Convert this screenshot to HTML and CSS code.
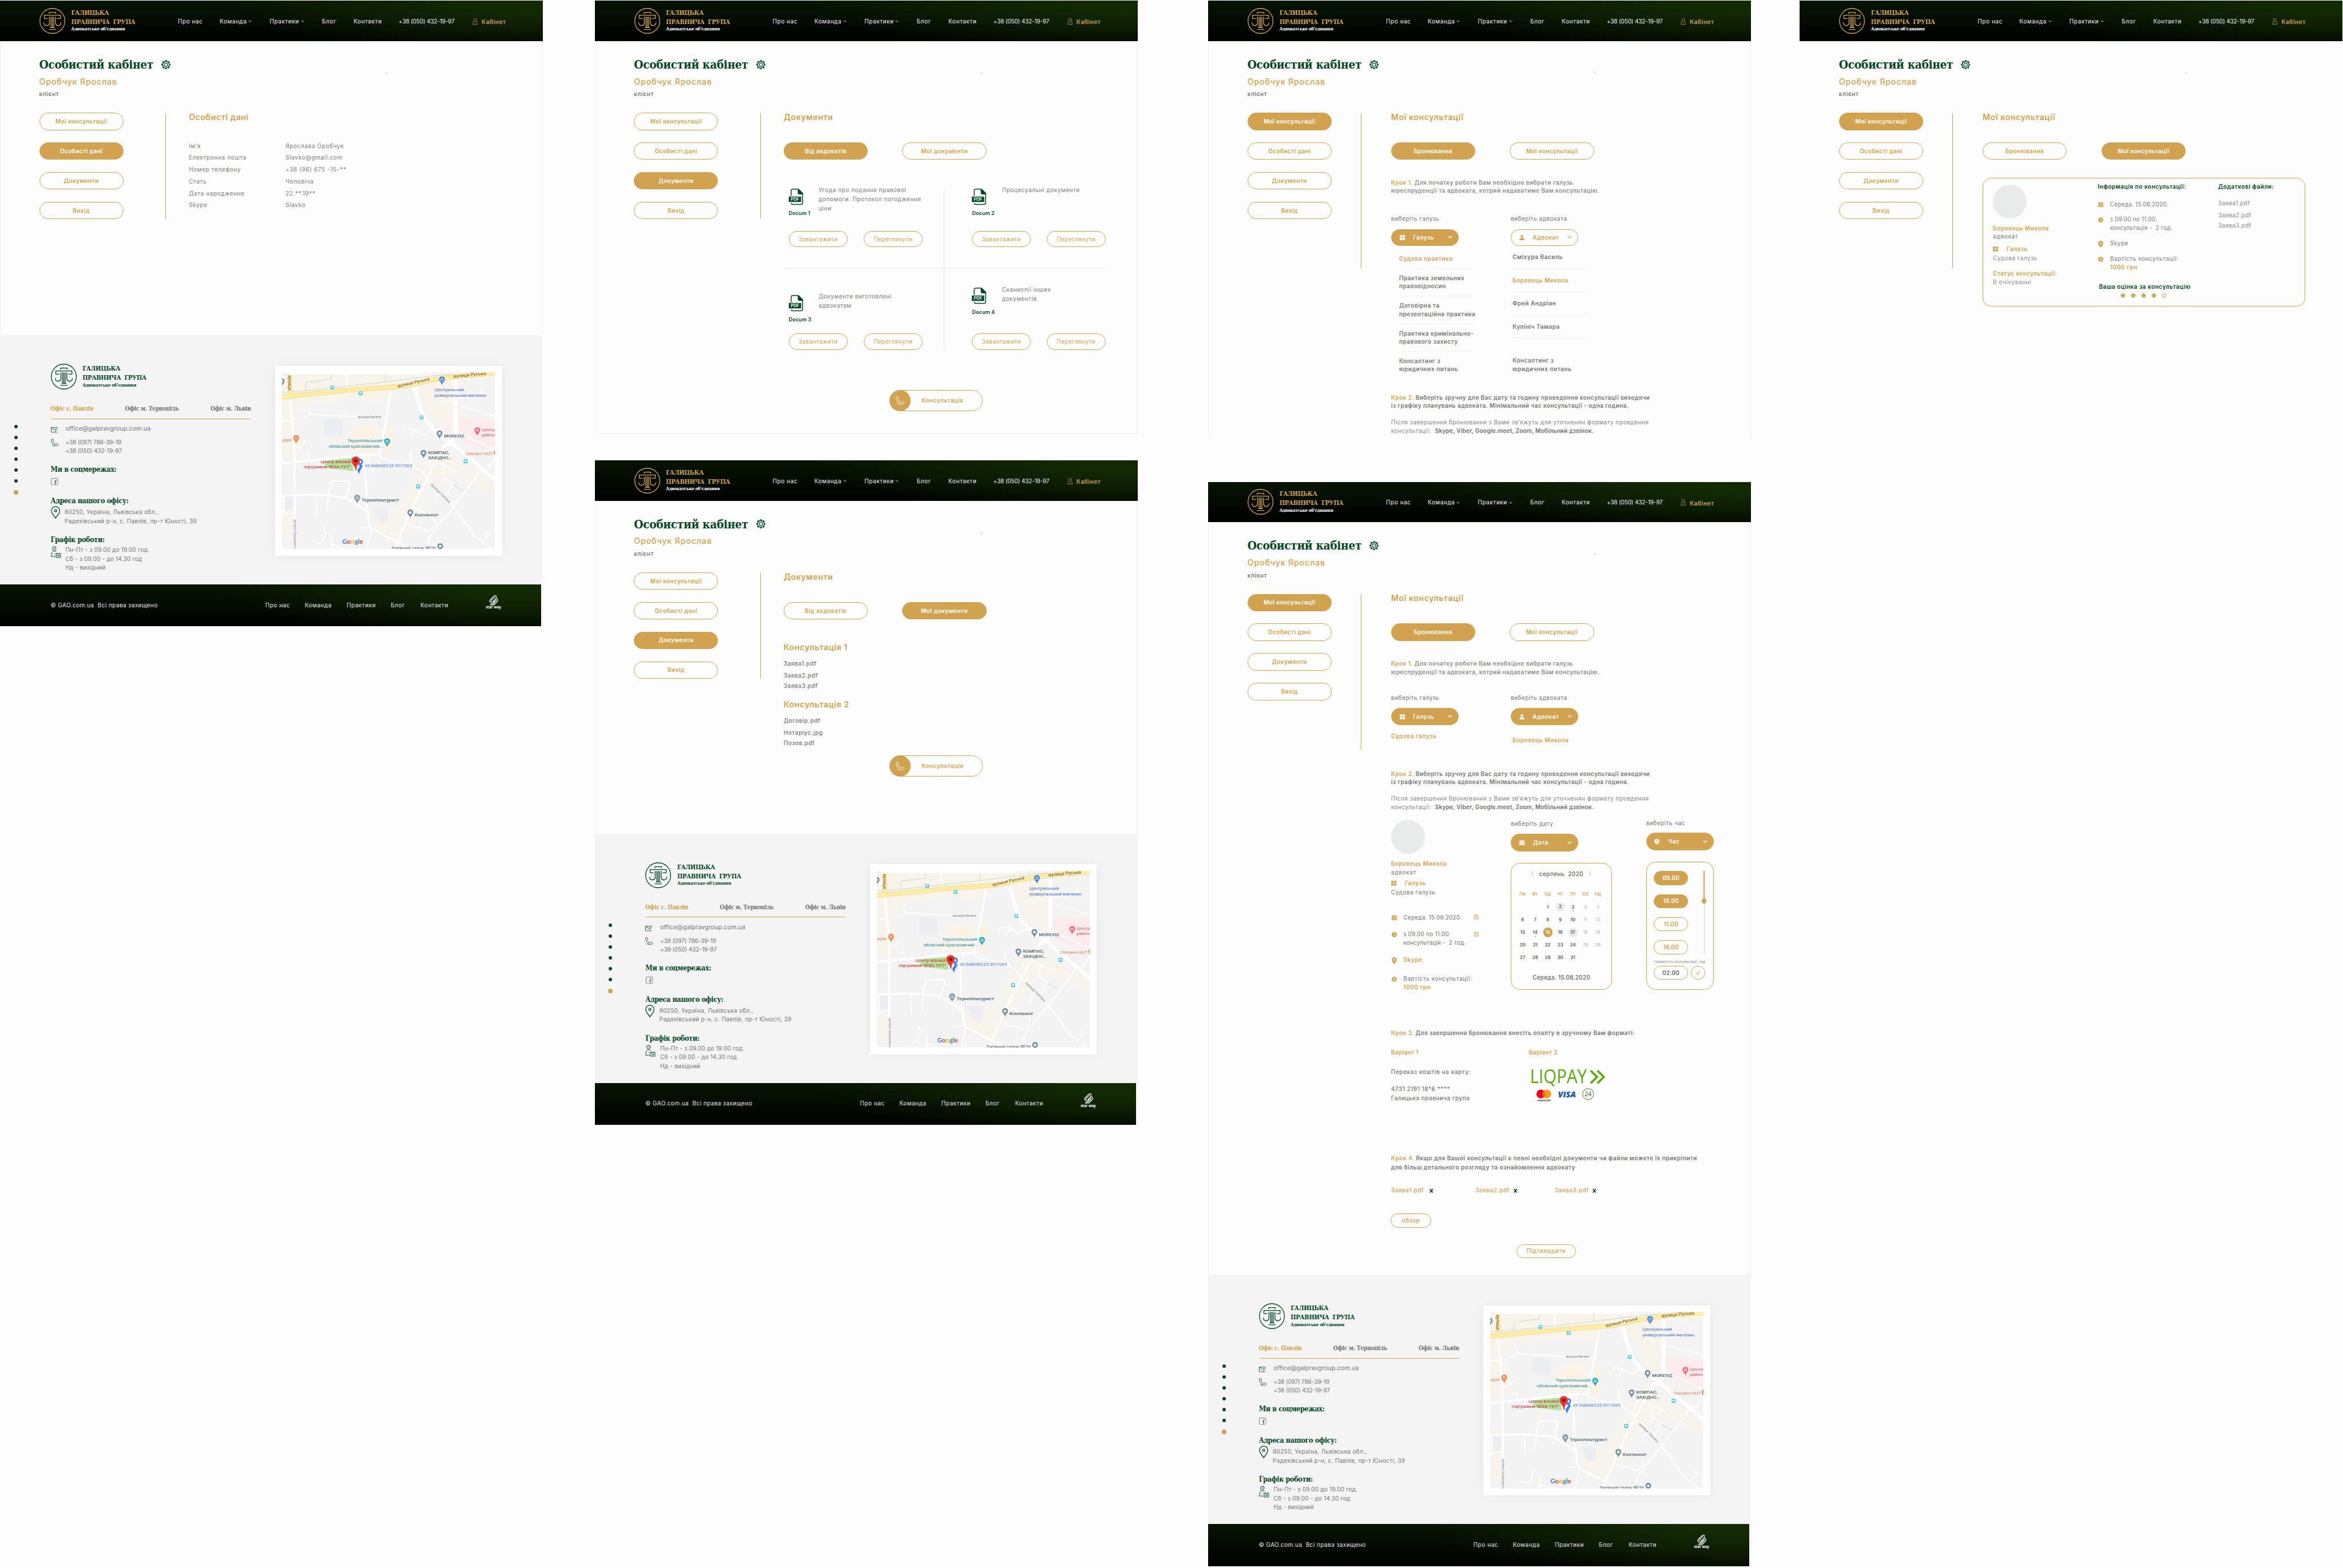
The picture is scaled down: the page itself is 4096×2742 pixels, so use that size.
FILE: index.html
```html
<!DOCTYPE html>
<html lang="uk">
<head>
<meta charset="utf-8">
<title>Галицька правнича група — особистий кабінет</title>
<link rel="stylesheet" href="styles.css">
</head>
<body>
<svg class="sprite" aria-hidden="true">
  <symbol id="i-logo" viewBox="0 0 61 61"><g fill="none" stroke="currentColor" stroke-width="1.8"><circle cx="30.5" cy="30.5" r="29.5"/><path d="M23 13.8v-3.6h15.3v3.6M11.5 24.7V17h38v7.7M11.5 24.7h8.5M49.5 24.7H41M23.5 20.5V35.5a6.6 6.6 0 0 1-13.3-1.5M37.5 20.5V35.5a6.6 6.6 0 0 0 13.3-1.5M27.3 20.5V45.5M30.4 20.5V45.5M33.6 20.5V45.5M25 46.3h11.5M22.5 50.8H39"/></g></symbol>
  <symbol id="i-gear" viewBox="0 0 22 22"><g fill="none" stroke="currentColor"><circle cx="11" cy="11" r="8" stroke-width="1.9"/><circle cx="11" cy="11" r="9.8" stroke-width="2.3" stroke-dasharray="3.85 3.85" stroke-dashoffset="1.9"/><circle cx="11" cy="11" r="4" stroke-width="1.7"/></g></symbol>
  <symbol id="i-chevron" viewBox="0 0 12 8"><path d="M1.5 1.5L6 6l4.500-4.500" fill="none" stroke="currentColor" stroke-width="1.9"/></symbol>
  <symbol id="i-left" viewBox="0 0 7 14"><path d="M5.500 1.500L1.500 7l4 5.500" fill="none" stroke="currentColor" stroke-width="1.6"/></symbol>
  <symbol id="i-right" viewBox="0 0 7 14"><path d="M1.500 1.500L5.500 7l-4 5.500" fill="none" stroke="currentColor" stroke-width="1.6"/></symbol>
  <symbol id="i-user" viewBox="0 0 13 15"><g fill="none" stroke="currentColor" stroke-width="1.100"><ellipse cx="6.500" cy="4.500" rx="3.400" ry="3.900"/><path d="M4.200 8C2 9 1 10.500 1 14h11c0-3.500-1-5-3.200-6"/></g></symbol>
  <symbol id="i-person" viewBox="0 0 13 13"><path fill="currentColor" d="M6.500 0a3.200 3.200 0 0 1 3.200 3.300c0 1.800-1.400 3.400-3.200 3.400S3.300 5.100 3.300 3.300A3.200 3.200 0 0 1 6.500 0zM0 13c0-3.600 2-5 4.300-5.200h4.400C11 8 13 9.400 13 13z"/></symbol>
  <symbol id="i-grid" viewBox="0 0 13 12"><path fill="currentColor" d="M0 0h6v5.500H0zM7.200 0h6v5.500h-6zM0 6.600h6V12H0zM7.200 6.600h6V12h-6z"/></symbol>
  <symbol id="i-calendar" viewBox="0 0 12 12"><path fill="currentColor" fill-rule="evenodd" d="M2.200 0h1.600v1.300h4.400V0h1.600v1.300H12v2.300H0V1.300h2.200zM0 4.300h12V11a1 1 0 0 1-1 1H1a1 1 0 0 1-1-1zM2.300 6v1.500h1.700V6zm2.900 0v1.500h1.700V6zm2.900 0v1.500h1.700V6zM2.300 8.700v1.500h1.700V8.700zm2.900 0v1.500h1.700V8.700zm2.900 0v1.500h1.700V8.700z"/></symbol>
  <symbol id="i-clock" viewBox="0 0 12 12"><path fill="currentColor" fill-rule="evenodd" d="M6 0a6 6 0 1 1 0 12A6 6 0 0 1 6 0zM5.300 2.200v4.300l2.900 2.600 1-1.100-2.500-2.200V2.200z"/></symbol>
  <symbol id="i-pin" viewBox="0 0 12 16"><path fill="currentColor" fill-rule="evenodd" d="M6 0a6 6 0 0 1 6 6c0 3.800-3.600 7-6 10C3.600 13 0 9.800 0 6a6 6 0 0 1 6-6zm0 3.900a2.200 2.200 0 1 0 0 4.400 2.200 2.200 0 0 0 0-4.400z"/></symbol>
  <symbol id="i-coin" viewBox="0 0 12 12"><circle cx="6" cy="6" r="6" fill="currentColor"/><path d="M7.900 4.300C7.500 3.400 4.300 3.100 4.300 4.700c0 1.500 3.500.9 3.500 2.600 0 1.500-3.200 1.500-3.700.4M6 2.200v7.600" fill="none" stroke="#fdfdfd" stroke-width="1"/></symbol>
  <symbol id="i-phone" viewBox="0 0 20 20"><g fill="none" stroke="currentColor" stroke-width="1.300" stroke-linejoin="round" stroke-linecap="round"><path d="M2.500 1.200C4.200-.3 6.800 1.400 6.800 4c0 2-1.600 2.200-1.100 3.900.7 2.200 3.300 4.900 5.200 5.700 1.800.7 2.500-1 4.400-1.100 2.600 0 4.700 2.200 3.800 4.100-.9 1.700-3.200 2.200-5.300 2C7.600 18 1 10.600 1 5.200c0-1.600.4-3.100 1.500-4z"/><path d="M4 18.200c1.300 1 1.800-.7 3-.2s1.600 1.100 2.800.6"/></g></symbol>
  <symbol id="i-mail" viewBox="0 0 17 13"><path d="M15 12H2a1.300 1.300 0 0 1-1.300-1.300V1h15.500M1 1l6.600 5.600 3-2M13 4h2.500M11 7h2.500M9.500 9.500h2M10 6l2-2" fill="none" stroke="currentColor" stroke-width="1.200"/></symbol>
  <symbol id="i-facebook" viewBox="0 0 17 17"><rect x=".7" y=".7" width="15.600" height="15.600" rx="1.500" fill="none" stroke="currentColor" stroke-width="1.300"/><path d="M13.300 5.500h-1.200c-1.300 0-1.700.7-1.700 1.800V16M7.500 9.300h5.200" fill="none" stroke="currentColor" stroke-width="1.900"/></symbol>
  <symbol id="i-marker" viewBox="0 0 22 30"><g fill="none" stroke="currentColor" stroke-width="1.800"><path d="M11 1.200c5.400 0 9.800 4.200 9.800 9.600C20.800 18 13.500 24 11 28.500 8.500 24 1.200 18 1.200 10.800 1.200 5.400 5.600 1.200 11 1.200z"/><circle cx="11" cy="10.800" r="2.600"/></g></symbol>
  <symbol id="i-schedule" viewBox="0 0 24 28"><g fill="none" stroke="currentColor" stroke-width="1.300"><circle cx="7.800" cy="5.300" r="4.500"/><path d="M10 3L7.500 5.800H6M11 24.500H.8l1.500-8.500c.5-3 2.500-4.200 5.500-4.200s4.400.8 5 2.700M8 18.500h3"/><path d="M12.500 18h10.700v9.300H12.500zM15 16v3M20.500 16v3M15 21.500h6M15 24.200h6"/></g></symbol>
  <symbol id="i-starway" viewBox="0 0 23 24"><g fill="none" stroke="currentColor" stroke-width="1.700" stroke-linejoin="round"><path d="M18 .8h-4L5 9.500c-3 3-3 6 .5 8.500M18 .8v6.700l-8.500 8.200M15 3.500L7.500 11c-2 2-1.800 4 .2 5.500M19 7c4 2.500 3.500 6 1 8.700L13 23H4.500l11-10.500M17 10c1.500 1.500 1 3.500-.5 5L9.500 22"/></g></symbol>
  <symbol id="i-star" viewBox="0 0 15 14"><path d="M7.500.3l2.200 4.700 5 .6-3.700 3.500 1 4.900-4.500-2.500L3 14l1-4.900L.3 5.600l5-.6z" fill="currentColor"/></symbol>
  <symbol id="i-star-empty" viewBox="0 0 15 14"><path d="M7.500 1.600l1.800 3.900 4.200.5-3.100 2.900.8 4.100-3.700-2-3.700 2 .8-4.100L1.500 6l4.200-.5z" fill="none" stroke="currentColor" stroke-width="1.300"/></symbol>
  <symbol id="i-check" viewBox="0 0 12 12"><path d="M1 6.500l3.500 4L11 1.500" fill="none" stroke="currentColor" stroke-width="1.500"/></symbol>
  <symbol id="i-cross" viewBox="0 0 10 10"><path d="M1 0l8 10M9 0L1 10" stroke="currentColor" stroke-width="2.600"/></symbol>
  <symbol id="m-pin" viewBox="0 0 20 27"><path d="M10 0c5 0 8.500 3.700 8.500 8.500C18.500 15 11 17.500 10 26 9 17.500 1.500 15 1.500 8.500 1.500 3.700 5 0 10 0z" fill="currentColor"/></symbol>
  <symbol id="m-bus" viewBox="0 0 10 10"><rect width="10" height="10" rx="1.500" fill="#1fb6ee"/><path d="M2 2h6v4.500H2zM2 7.500h2v1H2zM6 7.500h2v1H6z" fill="#fff"/></symbol>
</svg>

<div class="board">
  <div class="column">
    <article class="screen">
      <site-header></site-header>
      <main class="cabinet cabinet--profile">
        <user-title></user-title>
        <div class="workspace">
          <side-menu active="1"></side-menu>
          <section class="panel">
            <h2 class="heading">Особисті дані</h2>
            <dl class="profile">
              <dt>Ім’я</dt><dd>Ярослава Оробчук</dd>
              <dt>Електронна пошта</dt><dd>Slavko@gmail.com</dd>
              <dt>Номер телефону</dt><dd>+38 (96) 675 -15-**</dd>
              <dt>Стать</dt><dd>Чоловіча</dd>
              <dt>Дата народження</dt><dd>22.**.19**</dd>
              <dt>Skype</dt><dd>Slavko</dd>
            </dl>
          </section>
        </div>
      </main>
      <site-footer></site-footer>
    </article>
  </div>

  <div class="column">
    <article class="screen screen--documents">
      <site-header></site-header>
      <main class="cabinet cabinet--documents">
        <user-title></user-title>
        <div class="workspace">
          <side-menu active="2"></side-menu>
          <section class="panel">
            <h2 class="heading">Документи</h2>
            <div class="tabs"><a class="pill pill--on">Від авдокатів</a><a class="pill">Мої документи</a></div>
            <div class="docs">
              <div class="doc"><div class="doc__head"><pdf-file>Docum 1</pdf-file><p class="doc__text">Угода про подання правової<br>допомоги. Протокол погодження<br>ціни</p></div><div class="doc__actions"><a class="pill pill--thin">Завантажити</a><a class="pill pill--thin">Переглянути</a></div></div>
              <div class="doc"><div class="doc__head"><pdf-file>Docum 2</pdf-file><p class="doc__text">Процесуальні документи</p></div><div class="doc__actions"><a class="pill pill--thin">Завантажити</a><a class="pill pill--thin">Переглянути</a></div></div>
              <div class="doc doc--third"><div class="doc__head"><pdf-file>Docum 3</pdf-file><p class="doc__text">Документи виготовлені<br>адвокатам</p></div><div class="doc__actions"><a class="pill pill--thin">Завантажити</a><a class="pill pill--thin">Переглянути</a></div></div>
              <div class="doc doc--fourth"><div class="doc__head"><pdf-file>Docum 4</pdf-file><p class="doc__text">Сканкопії інших<br>документів</p></div><div class="doc__actions"><a class="pill pill--thin">Завантажити</a><a class="pill pill--thin">Переглянути</a></div></div>
            </div>
            <a class="call call--docs"><span class="call__icon"><svg><use href="#i-phone"/></svg></span><span class="call__text">Консультація</span></a>
          </section>
        </div>
      </main>
    </article>

    <article class="screen screen--files">
      <site-header></site-header>
      <main class="cabinet cabinet--files">
        <user-title></user-title>
        <div class="workspace">
          <side-menu active="2"></side-menu>
          <section class="panel">
            <h2 class="heading">Документи</h2>
            <div class="tabs"><a class="pill">Від авдокатів</a><a class="pill pill--on">Мої документи</a></div>
            <h3 class="heading heading--first">Консультація 1</h3>
            <ul class="files"><li>Заява1.pdf</li><li>Заява2.pdf</li><li>Заява3.pdf</li></ul>
            <h3 class="heading heading--next">Консультація 2</h3>
            <ul class="files"><li>Договір.pdf</li><li>Нотаріус.jpg</li><li>Позов.pdf</li></ul>
            <a class="call call--files"><span class="call__icon"><svg><use href="#i-phone"/></svg></span><span class="call__text">Консультація</span></a>
          </section>
        </div>
      </main>
      <site-footer></site-footer>
    </article>
  </div>

  <div class="column">
    <article class="screen screen--booking">
      <site-header></site-header>
      <main class="cabinet cabinet--choice">
        <user-title></user-title>
        <div class="workspace workspace--tall">
          <side-menu active="0"></side-menu>
          <section class="panel">
            <h2 class="heading">Мої консультації</h2>
            <div class="tabs"><a class="pill pill--on">Бронювання</a><a class="pill">Мої консультації</a></div>
            <p class="step step--first"><b>Крок 1.</b> Для початку роботи Вам необхідно вибрати галузь<br>юреспруденції та адвоката, котрий надаватиме Вам консультацію.</p>
            <div class="choice choice--open">
              <div>
                <p class="label">виберіть галузь</p>
                <div class="select select--on"><svg class="ico"><use href="#i-grid"/></svg><span>Галузь</span><svg class="chev"><use href="#i-chevron"/></svg></div>
                <ul class="options options--area">
                  <li class="is-on">Судова практика</li><li>Практика земельних<br>правовідносин</li><li>Договірна та<br>презентаційна практика</li><li>Практика кримінально-<br>правового захисту</li><li>Консалтинг з<br>юридичних питань</li>
                </ul>
              </div>
              <div>
                <p class="label">виберіть адвоката</p>
                <div class="select"><svg class="ico"><use href="#i-person"/></svg><span>Адвокат</span><svg class="chev"><use href="#i-chevron"/></svg></div>
                <ul class="options options--lawyer">
                  <li>Сміхура Василь</li><li class="is-on">Боровець Микола</li><li>Фрей Андріан</li><li>Кулініч Тамара</li><li>Консалтинг з<br>юридичних питань</li>
                </ul>
              </div>
            </div>
            <p class="step"><b>Крок 2.</b> Виберіть зручну для Вас дату та годину проведення консультації виходячи<br>із графіку планувань адвоката. Мінімальний час консультації - одна година.</p>
            <p class="note">Після завершення бронювання з Вами зв’яжуть для уточненян формату провдення<br>консультації: &nbsp;<strong>Skype, Viber, Google.meet, Zoom, Мобільний дзвінок.</strong></p>
          </section>
        </div>
      </main>
    </article>

    <article class="screen">
      <site-header></site-header>
      <main class="cabinet cabinet--order">
        <user-title></user-title>
        <div class="workspace workspace--tall">
          <side-menu active="0"></side-menu>
          <section class="panel">
            <h2 class="heading">Мої консультації</h2>
            <div class="tabs"><a class="pill pill--on">Бронювання</a><a class="pill">Мої консультації</a></div>
            <p class="step step--first"><b>Крок 1.</b> Для початку роботи Вам необхідно вибрати галузь<br>юреспруденції та адвоката, котрий надаватиме Вам консультацію.</p>
            <div class="choice choice--done">
              <div>
                <p class="label">виберіть галузь</p>
                <div class="select select--on"><svg class="ico"><use href="#i-grid"/></svg><span>Галузь</span><svg class="chev"><use href="#i-chevron"/></svg></div>
                <p class="picked">Судова галузь</p>
              </div>
              <div>
                <p class="label">виберіть адвоката</p>
                <div class="select select--on"><svg class="ico"><use href="#i-person"/></svg><span>Адвокат</span><svg class="chev"><use href="#i-chevron"/></svg></div>
                <p class="picked picked--lawyer">Боровець Микола</p>
              </div>
            </div>
            <p class="step"><b>Крок 2.</b> Виберіть зручну для Вас дату та годину проведення консультації виходячи<br>із графіку планувань адвоката. Мінімальний час консультації - одна година.</p>
            <p class="note">Після завершення бронювання з Вами зв’яжуть для уточненян формату провдення<br>консультації: &nbsp;<strong>Skype, Viber, Google.meet, Zoom, Мобільний дзвінок.</strong></p>

            <div class="booking">
              <div class="summary">
                <div class="avatar"></div>
                <p class="name">Боровець Микола</p>
                <p class="role">адвокат</p>
                <p class="area"><svg class="ico"><use href="#i-grid"/></svg>Галузь</p>
                <p class="area-name">Судова галузь</p>
                <ul class="facts">
                  <li><svg class="ico"><use href="#i-calendar"/></svg><span class="num">Середа. 15.08.2020.</span><svg class="edit"><use href="#i-gear"/></svg></li>
                  <li><svg class="ico"><use href="#i-clock"/></svg><span class="num">з 09.00 по 11.00.<br>консультація -&nbsp; 2 год.</span><svg class="edit"><use href="#i-gear"/></svg></li>
                  <li><svg class="ico ico--pin"><use href="#i-pin"/></svg><b>Skype</b></li>
                  <li><svg class="ico"><use href="#i-coin"/></svg><span>Вартість консультації:<br><b>1000 грн</b></span></li>
                </ul>
              </div>
              <div class="date">
                <p class="label">виберіть дату</p>
                <div class="select select--on select--date"><svg class="ico"><use href="#i-calendar"/></svg><span>Дата</span><svg class="chev"><use href="#i-chevron"/></svg></div>
                <div class="calendar">
                  <div class="calendar__head"><svg><use href="#i-left"/></svg><span>серпень&nbsp; 2020</span><svg><use href="#i-right"/></svg></div>
                  <div class="calendar__grid">
                    <b>Пн</b><b>Вт</b><b>Ср</b><b>Чт</b><b>Пт</b><b>Сб</b><b>Нд</b>
                    <i></i><i></i><i>1</i><i class="mark">2</i><i class="dot">3</i><i class="off">4</i><i class="off">5</i>
                    <i>6</i><i>7</i><i>8</i><i>9</i><i>10</i><i class="off">11</i><i class="off">12</i>
                    <i>13</i><i class="dot">14</i><i class="sel">15</i><i>16</i><i class="mark">17</i><i class="off">18</i><i class="off">19</i>
                    <i>20</i><i>21</i><i>22</i><i>23</i><i>24</i><i class="off">25</i><i class="off">26</i>
                    <i>27</i><i>28</i><i>29</i><i>30</i><i>31</i>
                  </div>
                  <p class="calendar__foot">Середа. 15.08.2020</p>
                </div>
              </div>
              <div class="time">
                <p class="label">виберіть час</p>
                <div class="select select--on select--time"><svg class="ico"><use href="#i-clock"/></svg><span>Час</span><svg class="chev"><use href="#i-chevron"/></svg></div>
                <div class="hours">
                  <div class="hours__row">
                    <div class="hours__list"><a class="hour hour--on">09.00</a><a class="hour hour--on">10.00</a><a class="hour">11.00</a><a class="hour">16.00</a></div>
                    <div class="track"><span class="track__past"></span><span class="track__knob"></span><span class="track__rest"></span></div>
                  </div>
                  <p class="hours__label">тривалість консультації, год</p>
                  <div class="hours__end"><a class="hour hour--length">02.00</a><a class="hour hour--ok"><svg><use href="#i-check"/></svg></a></div>
                </div>
              </div>
            </div>

            <p class="step step--pay"><b>Крок 3.</b> Для завершення бронювання внесіть опалту в зручному Вам форматі:</p>
            <div class="payment">
              <div>
                <p class="variant">Варіант 1</p>
                <p class="card-text">Переказ коштів на карту:</p>
                <p class="card-text card-text--num">4731 2191 18*6 ****<br>Галицька правнича група</p>
              </div>
              <div>
                <p class="variant">Варіант 2</p>
                <svg class="liqpay" viewBox="0 0 190 86">
                  <text x="1" y="37" font-size="43.500" textLength="134" lengthAdjust="spacingAndGlyphs" fill="#5ea80c">LIQPAY</text>
                  <path d="M144 7l15 15-15 15M160 7l15 15-15 15" fill="none" stroke="#5ea80c" stroke-width="5"/>
                  <circle cx="26.500" cy="62.300" r="10.300" fill="#e8001c"/><circle cx="40.500" cy="62.300" r="10.300" fill="#f79a1d"/><path d="M33.500 54.700a10.300 10.300 0 0 1 0 15.200 10.300 10.300 0 0 1 0-15.200z" fill="#ff5f00"/>
                  <text x="18" y="79" font-size="6.500" textLength="32" fill="#333" font-weight="600">mastercard</text>
                  <text x="67" y="70" font-size="18.500" font-weight="800" font-style="italic" textLength="42" lengthAdjust="spacingAndGlyphs" fill="#15529c">VISA</text>
                  <circle cx="138" cy="62.500" r="13" fill="none" stroke="#5fa043" stroke-width="1.600"/>
                  <text x="138" y="67.500" font-size="13.500" text-anchor="middle" fill="#444">24</text>
                </svg>
              </div>
            </div>
            <p class="step step--attach"><b>Крок 4.</b> Якщо для Вашої консультації є певні необхідні документи чи файли можете їх прикріпити<br>для більш детального розгляду та ознайомлення адвокату</p>
            <ul class="attached"><li>Заява1.pdf<svg><use href="#i-cross"/></svg></li><li>Заява2.pdf<svg><use href="#i-cross"/></svg></li><li>Заява3.pdf<svg><use href="#i-cross"/></svg></li></ul>
            <a class="pill pill--thin pill--browse">обзор</a>
            <a class="pill pill--thin pill--confirm">Підтвердити</a>
          </section>
        </div>
      </main>
      <site-footer></site-footer>
    </article>
  </div>

  <div class="column">
    <article class="screen screen--plain">
      <site-header></site-header>
      <main class="cabinet cabinet--history">
        <user-title></user-title>
        <div class="workspace workspace--tall">
          <side-menu active="0"></side-menu>
          <section class="panel">
            <h2 class="heading">Мої консультації</h2>
            <div class="tabs"><a class="pill">Бронювання</a><a class="pill pill--on">Мої консультації</a></div>
            <div class="ticket">
              <div class="ticket__who">
                <div class="avatar"></div>
                <p class="name">Боровець Микола</p>
                <p class="role">адвокат</p>
                <p class="area"><svg class="ico"><use href="#i-grid"/></svg>Галузь</p>
                <p class="area-name">Судова галузь</p>
                <p class="status">Статус консультації:</p>
                <p class="status-value">В очікуванні</p>
              </div>
              <div class="ticket__info">
                <h4 class="ticket__title">Інформація по консультації:</h4>
                <ul class="facts">
                  <li><svg class="ico"><use href="#i-calendar"/></svg><span class="num">Середа. 15.08.2020.</span></li>
                  <li><svg class="ico"><use href="#i-clock"/></svg><span class="num">з 09.00 по 11.00.<br>консультація -&nbsp; 2 год.</span></li>
                  <li><svg class="ico ico--pin"><use href="#i-pin"/></svg><span>Skype</span></li>
                  <li><svg class="ico"><use href="#i-coin"/></svg><span>Вартість консультації:<br><b>1000 грн</b></span></li>
                </ul>
                <h4 class="ticket__title ticket__title--rate">Ваша оцінка за консультацію</h4>
                <div class="stars"><svg><use href="#i-star"/></svg><svg><use href="#i-star"/></svg><svg><use href="#i-star"/></svg><svg><use href="#i-star"/></svg><svg><use href="#i-star-empty"/></svg></div>
              </div>
              <div class="ticket__files">
                <h4 class="ticket__title">Додаткові файли:</h4>
                <ul class="files"><li>Заява1.pdf</li><li>Заява2.pdf</li><li>Заява3.pdf</li></ul>
              </div>
            </div>
          </section>
        </div>
      </main>
    </article>
  </div>
</div>
<script src="components.js"></script>
</body>
</html>
```

FILE: styles.css
```css
/* 1rem equals ten layout units of the 5525-unit board */
html { font-size: 7.4136px; }
* { box-sizing: border-box; margin: 0; padding: 0; }
body { background: #fff; overflow: hidden; font: 400 1.35rem/2rem Inter, sans-serif; letter-spacing: .056em; color: #757575; }
ul { list-style: none; }
p, a, li, h1, h2, h3, h4, dt, dd, span { white-space: nowrap; }
svg { display: block; flex: none; overflow: visible; }
.sprite { position: absolute; width: 0; height: 0; }

.board { display: flex; width: 4096px; height: 2742px; background: #fdfdfd; overflow: hidden; }
.column { flex: none; width: 128rem; margin-right: 12.25rem; }
.column:nth-child(2) { margin-right: 16.65rem; }
.column:nth-child(3) { margin-right: 11.5rem; }
.column:nth-child(4) { margin-right: 0; }
.screen { width: 128rem; padding-top: .2rem; background: #fdfdfd; box-shadow: inset 1px 0 #efefef, inset -1px 0 #efefef; }
.screen--documents { box-shadow: inset 0 0 0 1px #efefef; }
.screen--plain { box-shadow: none; }
site-header, site-footer, user-title { display: block; }

/* top bar */
.topbar { display: flex; align-items: center; height: 9.5rem; padding-left: 9.3rem; background: radial-gradient(ellipse 60% 130% at 100% 0, #122a04 20%, transparent), linear-gradient(to top, #000300 8%, #071402 100%); color: #f2f2f2; }
.brand { display: flex; align-items: center; width: 32.65rem; color: #d1a350; }
.brand__mark { width: 6.1rem; height: 6.1rem; }
.brand__text { margin: -.2rem 0 0 1.4rem; font-family: "DejaVu Serif Condensed", "DejaVu Serif", serif; font-weight: 700; font-size: 1.5rem; line-height: 2.12rem; letter-spacing: -.03em; }
.brand__text p { white-space: pre; }
.brand__sub { font-size: 1.05rem; line-height: 1.4rem; letter-spacing: -.038em; color: #fff; }
.nav { display: grid; grid-template-columns: 9.85rem 11.8rem 12.35rem 7.45rem 10.6rem 17.4rem auto; padding-top: .2rem; }
.nav a { display: flex; align-items: center; }
.nav a:last-child { margin-top: .3rem; }
.nav svg { width: .8rem; height: .6rem; margin-left: .4rem; }
.nav .nav__phone { letter-spacing: -.014em; }
.nav .nav__user { color: #d1a350; font-weight: 600; }
.nav .nav__user svg { width: 1.3rem; height: 1.5rem; margin: -.3rem .9rem 0 0; }

/* title */
.cabinet { padding-left: 9.25rem; }
.cabinet--profile { height: 69.37rem; }
.cabinet--documents { height: 92.5rem; }
.cabinet--files { height: 78.55rem; }
.cabinet--choice { height: 93.5rem; }
.cabinet--order { height: 177.500rem; }
.screen--files { margin-top: 6.22rem; }
.screen--booking { margin-bottom: 10.3rem; }
.title { display: flex; align-items: center; height: 7.37rem; padding-top: 3.77rem; color: #004724; }
.title h1 { width: 27rem; font: 700 2.8rem/3.6rem "DejaVu Serif Condensed", "DejaVu Serif", serif; letter-spacing: -.018em; }
.title .title__gear { width: 2.2rem; height: 2.2rem; margin: -.1rem 0 0 1.8rem; }
.title .title__chevron { width: .7rem; height: .5rem; margin: 3.5rem 0 0 50.6rem; align-self: flex-start; color: #d1a350; }
.user { margin-top: .83rem; font-size: 1.93rem; line-height: 2.6rem; font-weight: 500; letter-spacing: .054em; color: #d1a350; }
.kind { margin-top: .7rem; letter-spacing: .07em; font-weight: 500; color: #6a6a6a; }

/* workspace */
.workspace { display: flex; align-items: flex-start; padding-top: 3.4rem; }
.menu { display: flex; flex-direction: column; gap: 2.9rem; }
.pill { display: flex; align-items: center; justify-content: center; width: 19.85rem; height: 4.1rem; border: .17rem solid #d1a350; border-radius: 2.05rem; color: #d1a350; font-weight: 600; letter-spacing: .043em; }
.pill--on { background: #d1a350; color: #fff; }
.pill--thin { width: 13.9rem; height: 3.85rem; font-weight: 400; letter-spacing: .042em; }
side-menu { display: block; order: 0; }
.panel { order: 2; width: 76rem; margin: -.3rem 0 0 5.35rem; }
.workspace::before { content: ""; order: 1; width: 1px; height: 24.9rem; margin: .1rem 0 0 9.95rem; background: #d1a350; }
.workspace--tall::before { height: 36.6rem; margin-left: 6.9rem; }
.workspace--tall .panel { margin-left: 7rem; }
.heading { font-size: 1.93rem; line-height: 2.6rem; font-weight: 600; letter-spacing: .034em; color: #d1a350; }
.tabs { display: flex; gap: 8.15rem; margin-top: 4.7rem; }
.profile { display: grid; grid-template-columns: 22.8rem auto; grid-auto-rows: 2.8rem; align-items: center; margin-top: 4.1rem; letter-spacing: .063em; color: #7c7c7c; }

/* documents from lawyers */
.docs { display: grid; grid-template-columns: 37.95rem 37.95rem; grid-template-rows: 18.95rem 18.95rem; margin-top: 6.8rem; }
.doc { display: flex; flex-direction: column; justify-content: space-between; padding: 0 0 5rem 6.5rem; }
.doc:nth-child(odd) { border-right: 1px solid #e6e6e6; padding-left: 1.2rem; }
.doc:nth-child(-n+2) { border-bottom: 1px solid #e6e6e6; }
.doc--third { padding: 6.15rem 0 0; }
.doc--fourth { padding: 4.45rem 0 0 6.5rem; }
.doc__head { display: flex; }
pdf-file { display: block; width: 7.05rem; color: #004724; }
pdf-file svg { width: 3.4rem; height: 3.85rem; }
.pdf__name { margin-top: 1rem; font-size: 1.2rem; font-weight: 600; letter-spacing: .02em; }
.doc__text { margin-top: -.6rem; line-height: 2.13rem; letter-spacing: .055em; color: #7c7c7c; }
.doc__actions { display: flex; gap: 3.75rem; }
.doc--third .doc__actions, .doc--fourth .doc__actions { margin-bottom: -.1rem; }
.call { display: flex; align-items: center; width: 21.95rem; height: 5rem; margin-left: 25rem; border: .17rem solid #d1a350; border-radius: 2.5rem; color: #d1a350; font-weight: 600; }
.call__icon { display: grid; place-items: center; width: 5rem; height: 5rem; margin: -.17rem 0 -.17rem -.17rem; border-radius: 50%; background: #d1a350; color: #fff; }
.call__icon svg { width: 2rem; height: 2rem; }
.call__text { margin-left: 2.6rem; letter-spacing: .052em; }
.call--docs { margin-top: 9.55rem; }
.call--files { margin-top: 1.86rem; }

/* own documents */
.heading--first { margin-top: 5.27rem; }
.heading--next { margin-top: 2.12rem; }
.files { margin-top: 1.55rem; font-weight: 500; }
.files li { margin-bottom: .43rem; }
.files li:first-child { margin-bottom: .82rem; }
.files li:last-child { margin-bottom: 0; }

/* booking steps */
.step { line-height: 1.97rem; font-weight: 600; letter-spacing: .044em; }
.step b, .facts b { font-weight: 600; color: #d1a350; }
.step--first { margin-top: 4.35rem; color: #8e8e8e; }
.note { margin-top: 1.93rem; line-height: 1.93rem; letter-spacing: .053em; color: #868686; }
.note strong { font-weight: 600; color: #6f6f6f; letter-spacing: .024em; }
.label { letter-spacing: .051em; }
.choice { display: grid; grid-template-columns: 28.2rem auto; }
.choice--open { height: 46.8rem; padding-top: 4.65rem; }
.choice--done { height: 22.05rem; padding-top: 4.2rem; }
.choice--done .select { margin-top: 1.3rem; height: 4.1rem; }
.select { display: flex; align-items: center; width: 15.9rem; height: 3.95rem; margin-top: 1.4rem; padding: 0 1.35rem 0 1.85rem; border: .17rem solid #d1a350; border-radius: 2.05rem; color: #d1a350; font-weight: 600; letter-spacing: .057em; }
.select--on { background: #d1a350; color: #fff; }
.ico { width: 1.25rem; height: 1.2rem; }
.select span { margin-left: 1.95rem; }
.chev { width: 1.1rem; height: .75rem; margin-left: auto; }
.options { font-weight: 600; line-height: 1.95rem; letter-spacing: .052em; }
.options li { width: 17.7rem; border-bottom: .2rem solid #efefef; }
.options li:last-child { border: 0; }
.options .is-on { color: #d1a350; }
.options--area { padding-left: 1.9rem; }
.options--area li { height: 6.53rem; padding-top: 1.2rem; }
.options--area li:first-child { height: 5.4rem; padding-top: 2.1rem; }
.options--lawyer { padding-left: .45rem; }
.options--lawyer li { display: flex; align-items: center; height: 5.45rem; }
.options--lawyer li:last-child { margin-top: 4.3rem; height: auto; }
.picked { margin-top: 1.6rem; color: #d1a350; font-weight: 600; letter-spacing: .057em; }
.picked--lawyer { margin: 2.500rem 0 0 .45rem; }

.booking { display: grid; grid-template-columns: 28.25rem 31.9rem auto; height: 42.27rem; }
.avatar { width: 7.95rem; height: 7.95rem; border-radius: 50%; background: #e9ebea; }
.summary { padding-top: 2.17rem; }
.name { margin-top: 1.3rem; font-weight: 600; letter-spacing: .053em; color: #d1a350; }
.role { margin-top: .1rem; letter-spacing: .07em; }
.area { display: flex; align-items: center; gap: 2rem; margin-top: .5rem; font-weight: 600; letter-spacing: .057em; color: #d1a350; }
.area-name { margin-top: .2rem; }
.facts { width: 20.7rem; margin-top: 3.88rem; }
.facts li { display: flex; align-items: flex-start; margin-bottom: 2rem; }
.facts .ico { width: 1.2rem; margin: .5rem 1.6rem 0 .1rem; color: #d1a350; }
.facts .ico--pin { height: 1.6rem; }
.facts .num { letter-spacing: .022em; }
.facts li:nth-child(3) { margin-bottom: 2.4rem; }
.edit { width: 1.3rem; height: 1.3rem; margin: .4rem 0 0 auto; color: #d1a350; }
.date { padding-top: 2.07rem; }
.time { padding-top: 1.87rem; }
.date .select, .time .select { height: 4.1rem; }
.time .select { margin-top: 1.3rem; }
.calendar { width: 23.8rem; height: 30rem; margin-top: 2.7rem; border: .17rem solid #d1a350; border-radius: 2.200rem; padding: 1.46rem 1.15rem 0; font-weight: 500; }
.calendar__head { display: flex; justify-content: center; align-items: center; gap: 1.25rem; color: #666; letter-spacing: .042em; }
.calendar__head svg { width: .6rem; height: 1.1rem; color: #d1a350; }
.calendar__grid { display: grid; grid-template-columns: repeat(7, 2.965rem); grid-auto-rows: 3rem; margin-top: 2.3rem; font-size: 1.05rem; font-weight: 600; letter-spacing: 0; color: #555; }
.calendar__grid > * { display: grid; place-items: center; position: relative; font-style: normal; font-weight: inherit; }
.calendar__grid b { color: #d1a350; letter-spacing: .03em; }
.calendar__grid .off { color: #b5b5b5; font-weight: 400; }
.calendar__grid .mark, .calendar__grid .sel { width: 2.2rem; height: 2.2rem; margin: .4rem auto; border-radius: 50%; background: #e9ebea; }
.calendar__grid .sel { background: #d1a350; color: #fff; }
.calendar__grid .dot::after { content: ""; position: absolute; left: 50%; top: 2.35rem; width: .3rem; height: .3rem; margin-left: -.15rem; border-radius: 50%; background: #d1a350; }
.calendar__foot { margin-top: 2.1rem; text-align: center; letter-spacing: .023em; color: #666; }
.hours { width: 15.95rem; height: 30.25rem; margin-top: 2.75rem; border: .17rem solid #d1a350; border-radius: 2.200rem; padding: 2.05rem 1.7rem 0; }
.hours__row { display: flex; justify-content: space-between; }
.hours__list { display: flex; flex-direction: column; gap: 2.15rem; }
.hour { display: grid; place-items: center; width: 8.05rem; height: 3.3rem; border: .17rem solid #d1a350; border-radius: 1.65rem; color: #d1a350; font-weight: 600; letter-spacing: .02em; }
.hour--on { background: #d1a350; color: #fff; }
.track { display: flex; flex-direction: column; align-items: center; width: 1.1rem; margin-right: -.1rem; height: 19.6rem; }
.track__past { width: .2rem; height: 6.5rem; background: #d1a350; }
.track__knob { width: 1.100rem; height: 1.1rem; border-radius: 50%; background: #d1a350; }
.track__rest { width: .15rem; flex: 1; background: #cfcfcf; }
.hours__label { margin-top: 1.1rem; font-size: .87rem; line-height: 1.4rem; letter-spacing: .005em; color: #8a8a8a; }
.hours__end { display: flex; gap: .7rem; margin-top: .2rem; }
.hour--length { color: #6a6a6a; }
.hour--ok { width: 3.3rem; }
.hour--ok svg { width: 1.2rem; height: 1.1rem; }

.step--pay { margin-top: 9.1rem; }
.payment { display: grid; grid-template-columns: 32.5rem auto; height: 13rem; margin-top: 2.64rem; font-weight: 500; }
.variant { color: #d1a350; font-weight: 600; letter-spacing: .04em; }
.card-text { margin-top: 2.63rem; letter-spacing: .059em; }
.card-text--num { margin-top: 2.05rem; line-height: 2.15rem; letter-spacing: .05em; }
.liqpay { width: 19rem; height: 8.6rem; margin: 2.6rem 0 0 .2rem; font-family: "Open Sans", sans-serif; letter-spacing: 0; }
.step--attach { margin-top: 11.83rem; line-height: 2.18rem; letter-spacing: .049em; }
.attached { display: grid; grid-template-columns: 19.87rem 18.7rem auto; margin-top: 3.4rem; color: #d1a350; font-weight: 500; }
.attached li { display: flex; align-items: center; gap: .9rem; }
.attached li:first-child { gap: 1.3rem; }
.attached svg { width: .9rem; height: .9rem; margin-top: .2rem; color: #004724; }
.pill--browse { width: 9.5rem; height: 3.35rem; margin: 4.4rem 0 0 -.1rem; font-weight: 500; letter-spacing: .056em; }
.pill--confirm { width: 14.15rem; height: 3.3rem; margin: 3.9rem 0 0 29.5rem; font-weight: 500; letter-spacing: .056em; }

/* consultation card */
.ticket { display: grid; grid-template-columns: 24.7rem 28.4rem auto; width: 76.1rem; height: 30.4rem; margin-top: 4.2rem; padding: 1.05rem 0 0 2.3rem; border: .17rem solid #d1a350; border-radius: 2rem; }
.ticket__who { padding-top: .5rem; }
.ticket .role { margin-top: 0; }
.ticket .area { margin-top: .9rem; }
.ticket .area-name { color: #8a8a8a; }
.status { margin-top: 1.6rem; font-weight: 600; letter-spacing: .043em; color: #d1a350; }
.status-value { color: #8f8f8f; }
.ticket__title { font-size: 1.35rem; line-height: 2rem; font-weight: 600; letter-spacing: .052em; color: #004724; }
.ticket .facts { margin-top: 2.1rem; color: #7c7c7c; line-height: 1.95rem; }
.ticket .facts li { margin-bottom: 1.65rem; }
.ticket .facts li:last-child { margin-bottom: 0; }
.ticket__title--rate { margin: 2.6rem 0 0 .3rem; }
.stars { display: flex; gap: .95rem; margin: .3rem 0 0 5.2rem; color: #d1a350; }
.stars svg { width: 1.48rem; height: 1.4rem; }
.ticket .files { margin-top: 1.9rem; font-weight: 400; color: #8a8a8a; letter-spacing: .045em; }

/* contacts */
.contacts { display: flex; align-items: flex-start; height: 58.8rem; background: #f4f4f4; color: #757575; font-weight: 400; }
.pager { display: flex; flex-direction: column; align-items: center; gap: 1.77rem; width: .8rem; margin: 21.13rem 7.82rem 0 3.33rem; }
.pager i { flex: none; width: .8rem; height: .8rem; border-radius: 50%; background: #004724; }
.pager i:last-child { width: 1.1rem; height: 1.1rem; background: #d1a350; }
.office { width: 47.2rem; padding-top: 6.75rem; }
.contacts .brand, .contacts .brand__sub { color: #004724; }
.offices { display: flex; justify-content: space-between; margin-top: 3.48rem; padding-bottom: 1.3rem; border-bottom: .17rem solid #d1a350; font: 700 1.4rem/2rem "DejaVu Serif Condensed", "DejaVu Serif", serif; letter-spacing: -.03em; }
.offices .is-on { color: #d1a350; }
.line { display: flex; align-items: flex-start; line-height: 2.07rem; letter-spacing: -.01em; }
.line svg { margin-right: 1.1rem; color: #004724; }
.line--mail { margin-top: 1.4rem; font-size: 1.45rem; line-height: 2rem; letter-spacing: .006em; }
.line--mail svg { width: 1.7rem; height: 1.3rem; margin: .55rem 1.8rem 0 0; }
.line--phone { margin-top: 1.1rem; }
.line--phone svg { width: 1.8rem; height: 1.8rem; margin: .1rem 1.7rem 0 0; }
.line--address { margin-top: .47rem; line-height: 2.1rem; letter-spacing: .03em; }
.line--address svg { width: 2.2rem; height: 3rem; margin-top: -.4rem; }
.line--hours { margin-top: .2rem; line-height: 2.1rem; letter-spacing: .02em; }
.line--hours svg { width: 2.4rem; height: 2.8rem; margin-top: .2rem; }
.contacts h4 { margin-top: 2.1rem; font: 700 1.7rem/2.4rem "DejaVu Serif Condensed", "DejaVu Serif", serif; letter-spacing: -.033em; color: #004724; }
.facebook { width: 1.7rem; height: 1.7rem; margin: .85rem 0 2.4rem .1rem; color: #6f6f6f; }
.contacts .facebook + h4 { margin-top: 0; }
.map { width: 53.5rem; height: 44.9rem; margin: 7.2rem 0 0 5.75rem; padding: 1.6rem 1.65rem 1.7rem; background: #fff; box-shadow: 0 0 2.5rem rgba(0, 0, 0, .06); }
.map svg { width: 50.200rem; height: 41.6rem; overflow: hidden; font-family: Roboto, sans-serif; letter-spacing: 0; }
.map use { overflow: visible; }

.bottom { display: grid; grid-template-columns: 50.6rem 9.3rem 9.9rem 10.4rem 7rem 15.4rem auto; align-items: center; width: 127.6rem; height: 9.9rem; padding-left: 11.95rem; background: radial-gradient(ellipse 60% 130% at 100% 0, #122a04 20%, transparent), linear-gradient(to top, #000300 8%, #071402 100%); color: #e6e6e6; }
.bottom a, .bottom p { margin-top: -.2rem; letter-spacing: .052em; }
.bottom .copy { letter-spacing: .042em; white-space: pre; }
.starway { display: flex; flex-direction: column; align-items: center; width: 3.6rem; margin-top: -1.4rem; color: #fff; }
.starway svg { width: 2.3rem; height: 2.4rem; }
.starway span { font: 700 .85rem/1.1rem "Open Sans", sans-serif; letter-spacing: -.01em; }
```

FILE: components.js
```js
const icon = (id, cls = '') => `<svg class="${cls}"><use href="#${id}"/></svg>`;

const brand = `<div class="brand">${icon('i-logo', 'brand__mark')}<div class="brand__text"><p>ГАЛИЦЬКА</p><p>ПРАВНИЧА  ГРУПА</p><p class="brand__sub">Адвокатське об’єднання</p></div></div>`;

/* street map: geometry is scaled to the panel, labels stay in panel units */
const X = x => ((x - 99) / 2.751).toFixed(1);
const Y = y => ((y - 117) / 3).toFixed(1);
const label = (x, y, len, size, fill, text, extra = '') =>
  `<text x="${X(x)}" y="${Y(y)}" font-size="${size}" fill="${fill}" textLength="${(len / 2.751).toFixed(1)}" lengthAdjust="spacingAndGlyphs" ${extra}>${text}</text>`;
const pin = (x, y, color, inner = '<circle cx="8" cy="7" r="3" fill="#fff"/>') =>
  `<g transform="translate(${X(x) - 8},${Y(y) - 22})" color="${color}"><use href="#m-pin" width="16" height="21.6"/>${inner}</g>`;
const bus = (x, y) => `<use href="#m-bus" x="${X(x) - 4.5}" y="${Y(y) - 4.5}" width="9" height="9"/>`;
const roads = [
  [16, 'M150 300L165 460L178 600L182 1160L185 1370'], [10, 'M90 463H160'], [13, 'M515 130L526 230'], [10, 'M1060 110L1062 150'],
  [26, 'M1225 130V570L1180 630'], [15, 'M806 235L778 440L730 700'], [16, 'M925 215L960 245L1000 380'], [26, 'M965 205L975 290L1020 440L1080 520L1180 600L1490 885'],
  [9, 'M230 440L285 415L530 430L775 440M270 375L285 415'], [8, 'M1400 215L1395 290L1230 303M1130 295L1148 321H1220M1260 358L1490 430'],
  [10, 'M1240 535L1300 575L1400 620L1430 645L1490 665'], [9, 'M890 545L902 510L960 522L1025 562L1075 520M960 522L940 580'],
  [18, 'M90 762L300 742L560 710L735 698'], [9, 'M180 650L225 645L250 605M240 695L275 695L280 740'], [9, 'M735 700L742 728L820 750L925 765'],
  [9, 'M932 670V735L960 790L1020 835'], [10, 'M1020 835L1040 880L1210 1065L1355 1280L1460 1370'], [14, 'M628 715L640 800L652 1060L665 1190L680 1225L840 1315L920 1360'],
  [10, 'M660 710L658 760L635 790'], [17, 'M1165 620L1040 870L930 1110L835 1350'], [9, 'M1020 835L1090 700'], [12, 'M1385 820L1220 1060L1100 1215L1055 1290L1050 1340'],
  [9, 'M1480 720L1455 770L1385 820M1455 770L1440 800'], [9, 'M1085 740L1165 785L1238 828M1165 785L1145 860L1205 908L1165 1000M1165 980Q1070 970 1100 1037'],
  [14, 'M90 992L300 985L400 990L515 1005L660 1108'], [11, 'M400 990L420 888H515Q540 890 540 915L515 1005'], [10, 'M320 990L325 1137M400 990L393 1100M112 1000V1120M90 1155Q120 1105 180 1105'],
  [9, 'M370 1215L382 1250Q365 1340 335 1328L305 1320M382 1250Q430 1260 425 1335L500 1370M425 1335L420 1370'], [8, 'M680 1225L650 1370M610 1222L675 1210'],
  [9, 'M955 1070L1080 1150Q1100 1170 1090 1200L1052 1243L990 1212L965 1220L905 1192'], [10, 'M1420 1245Q1450 1260 1430 1280L1400 1320'],
].map(([w, d]) => `<path d="${d}" stroke-width="${w}"/>`).join('');

const map = `<svg viewBox="0 0 502 416">
<rect width="502" height="416" fill="#f3f3f3"/>
<g transform="scale(.3635 .33333) translate(-99 -117)">
<path fill="#f8f4ec" d="M99 130H950L1480 110V160L1240 180L1250 420L1215 530L1130 520L1070 440L1020 300L925 235L815 245L800 320L530 300L250 350L190 420L240 640L200 720L99 740zM560 500L700 480L745 520L720 680L600 700L470 680zM780 460L830 520L800 700L750 690zM1100 640L1480 900V1000L1220 840L1050 960L990 1140L850 1330L700 1230L690 1110L860 1080L960 860zM190 900L160 1300H99V990z"/>
<path fill="#fbebeb" d="M1250 435L1480 460V670L1380 655L1250 590z"/><path fill="#fdf2e1" d="M578 513L705 530L695 590L570 575zM790 515L828 520L798 705L765 700z"/>
<path fill="#ecedf0" d="M375 440L490 450V560H375zM120 1000H170V1100H120zM680 1070L785 1080V1170L740 1180z"/>
<path fill="#b5e0a0" d="M390 740L555 725L562 816L372 792z"/>
<g fill="none" stroke="#e6e6e6" stroke-linejoin="round" stroke-linecap="round" transform="translate(1.500 1.500)">${roads}</g>
<g fill="none" stroke="#fff" stroke-linejoin="round" stroke-linecap="round">${roads}</g>
<path fill="none" stroke="#9fcfa6" stroke-width="2.500" d="M99 260L250 248L770 185L1100 140L1480 117M418 130V168L262 188Q250 192 252 248M768 130L772 185M1213 915L1277 955"/>
<path fill="none" stroke="#ecd488" stroke-width="34" d="M92 293L520 245L800 222L900 213L1050 175L1200 150L1490 122"/><path stroke="#ecd488" stroke-width="28" d="M148 110L152 280"/>
<path fill="none" stroke="#fdeca6" stroke-width="29" d="M92 293L520 245L800 222L900 213L1050 175L1200 150L1490 122"/><path stroke="#fdeca6" stroke-width="23" d="M148 110L152 285"/>
<path fill="#fff" d="M125 117H1005L985 133H140z"/>
</g>
${bus(425, 224)}${bus(609, 266)}${bus(1004, 436)}${bus(1289, 747)}${bus(982, 925)}
${label(850, 225, 212, 10, '#6b4c2a', 'вулиця Руська', `transform="rotate(-13 ${X(850)} ${Y(225)})"`)}
${label(1212, 155, 212, 10, '#6b4c2a', 'вулиця Руська', `transform="rotate(-5 ${X(1212)} ${Y(155)})"`)}
${label(138, 137, 100, 9.5, '#6b4c2a', 'вулиця', `transform="rotate(90 ${X(138)} ${Y(137)})"`)}
${label(178, 1158, 200, 7.5, '#777', 'вулиця Шашкевича', `transform="rotate(90 ${X(178)} ${Y(1158)})"`)}
${label(1062, 912, 172, 7.5, '#777', 'вулиця Липова', `transform="rotate(45 ${X(1062)} ${Y(912)})"`)}
${label(592, 442, 150, 7.5, '#777', 'вулиця Багата')}
${label(1087, 251, 192, 10.5, '#4a72c4', 'Центральний')}${label(1087, 290, 338, 10.500, '#4a72c4', 'універсальний магазин')}
${label(523, 612, 228, 10.5, '#1e8e9b', 'Тернопільський')}${label(401, 651, 350, 10.5, '#1e8e9b', 'обласний краєзнавчий…')}
${label(350, 759, 196, 10.5, '#c5302b', 'Центр візової')}${label(240, 798, 306, 10.5, '#c5302b', 'підтримки &quot;ВІЗА ТУТ&quot;')}
${label(634, 788, 308, 10, '#4f7fe0', '49.5486985,25.5917265')}
${label(1149, 577, 132, 10.5, '#4c6470', 'MOREVIZ', 'font-weight="500"')}
${label(1046, 696, 138, 10.5, '#4c6470', 'КОМПАС,', 'font-weight="500"')}${label(1046, 734, 152, 10.5, '#4c6470', 'ЗАХІДНО…', 'font-weight="500"')}
${label(616, 1032, 242, 10.5, '#4c6470', 'Тернопільтурист', 'font-weight="500"')}${label(959, 1136, 154, 10.5, '#4c6470', 'Континент', 'font-weight="500"')}
${label(1395, 534, 86, 10.5, '#d0626c', 'Центр')}${label(1395, 572, 86, 10.5, '#d0626c', 'район')}
${label(1289, 705, 176, 10.5, '#dd7f5c', 'Chicken HUT')}${label(93, 608, 68, 10.5, '#dd8352', 'церія')}
${label(808, 1370, 288, 10.5, '#4c6470', 'Дитячий садок №39')}
<text x="${X(490)}" y="${Y(1331)}" font-size="16.500" font-family="Lato, sans-serif" font-weight="700" textLength="49" lengthAdjust="spacingAndGlyphs" fill="#4285f4">G<tspan fill="#ea4335">o</tspan><tspan fill="#fbbc05">o</tspan><tspan>g</tspan><tspan fill="#34a853">l</tspan><tspan fill="#ea4335">e</tspan></text>
${pin(1137, 212, '#3f83e8', '<path d="M5 6h6v4.500H5zM6.500 6q0-2.500 1.500-2.500T9.500 6" fill="none" stroke="#fff"/>')}
${pin(1121, 595, '#76919f')}${pin(1017, 732, '#76919f')}${pin(931, 1154, '#76919f')}${pin(1125, 1393, '#76919f')}${pin(97, 225, '#76919f')}
${pin(587, 1050, '#76919f', '<path d="M4.500 6L8 4l3.500 2zM5 7v3M8 7v3M11 7v3M4.500 10.500h7" fill="none" stroke="#fff" stroke-width="1"/>')}
${pin(781, 650, '#1fa5ad', '<path d="M4.500 6L8 4l3.500 2zM5 7v3M8 7v3M11 7v3M4.500 10.500h7" fill="none" stroke="#fff" stroke-width="1"/>')}
${pin(1366, 572, '#ee6b75', '<path d="M6 4v6.500M10 4v6.500M6 7.200h4" stroke="#fff" stroke-width="1.400"/>')}
${pin(191, 628, '#f4864f', '<path d="M6.500 4v7M5.300 4v2.500h2.400V4M10 4v7" fill="none" stroke="#fff" stroke-width="1"/>')}
${pin(1490, 732, '#f4864f')}
${pin(606, 795, '#3f83e8')}
<g transform="translate(${X(577) - 10},${Y(713)})"><path d="M10 0c5.500 0 9.800 4.200 9.800 9.500C19.800 17 15 18 12.500 24l-1 8-1.500 1-1-3C9 22 .2 19 .2 9.500.200 4.200 4.500 0 10 0z" fill="#e8372c"/><circle cx="10" cy="10" r="4" fill="#8c0d12"/></g>
<path d="M${X(612)} ${Y(770)}l4 4-5 8-4 10-4-9z" fill="#3f83e8"/>
</svg>`;

const parts = {
  'site-header': () => `<header class="topbar">${brand}<nav class="nav"><a>Про нас</a><a>Команда${icon('i-chevron')}</a><a>Практики${icon('i-chevron')}</a><a>Блог</a><a>Контакти</a><a class="nav__phone">+38 (050) 432-19-97</a><a class="nav__user">${icon('i-user')}Кабінет</a></nav></header>`,

  'user-title': () => `<div class="title"><h1>Особистий кабінет</h1>${icon('i-gear', 'title__gear')}${icon('i-chevron', 'title__chevron')}</div><p class="user">Оробчук Ярослав</p><p class="kind">клієнт</p>`,

  'side-menu': el => `<nav class="menu">${['Мої консультації', 'Особисті дані', 'Документи', 'Вихід'].map((t, i) => `<a class="pill${i == el.getAttribute('active') ? ' pill--on' : ''}">${t}</a>`).join('')}</nav>`,

  'pdf-file': el => `<svg viewBox="0 0 34 38.500"><path d="M5.500 17V5q0-4 4-4H22l10.500 10.500V33q0 4-4 4H9.500q-4 0-4-3" fill="none" stroke="currentColor" stroke-width="2"/><path d="M21 1h3l9.500 9.500v3H25q-4 0-4-4zM0 18.500h29v13H0z" fill="currentColor"/><text x="14.500" y="29" font-size="10.500" font-weight="600" text-anchor="middle" fill="#fff" letter-spacing="0">PDF</text></svg><p class="pdf__name">${el.textContent}</p>`,

  'site-footer': () => `<footer><div class="contacts"><div class="pager">${'<i></i>'.repeat(7)}</div><div class="office">${brand}
<div class="offices"><a class="is-on">Офіс с. Павлів</a><a>Офіс м. Тернопіль</a><a>Офіс м. Львів</a></div>
<div class="line line--mail">${icon('i-mail')}<p>office@galpravgroup.com.ua</p></div>
<div class="line line--phone">${icon('i-phone')}<p>+38 (097) 786-39-19<br>+38 (050) 432-19-97</p></div>
<h4>Ми в соцмережах:</h4>${icon('i-facebook', 'facebook')}
<h4>Адреса нашого офісу:</h4>
<div class="line line--address">${icon('i-marker')}<p>80250, Україна, Львівська обл.,<br>Радехівський р-н, с. Павлів, пр-т Юності, 39</p></div>
<h4>Графік роботи:</h4>
<div class="line line--hours">${icon('i-schedule')}<p>Пн-Пт - з 09.00 до 19.00 год.<br>Сб - з 09.00 - до 14.30 год<br>Нд - вихідний</p></div>
</div><div class="map">${map}</div></div>
<div class="bottom"><p class="copy">© GAO.com.ua  Всі права захищено</p><a>Про нас</a><a>Команда</a><a>Практики</a><a>Блог</a><a>Контакти</a><div class="starway">${icon('i-starway')}<span>star way</span></div></div></footer>`,
};

for (const [tag, render] of Object.entries(parts)) {
  customElements.define(tag, class extends HTMLElement {
    connectedCallback() { this.innerHTML = render(this); }
  });
}
```
